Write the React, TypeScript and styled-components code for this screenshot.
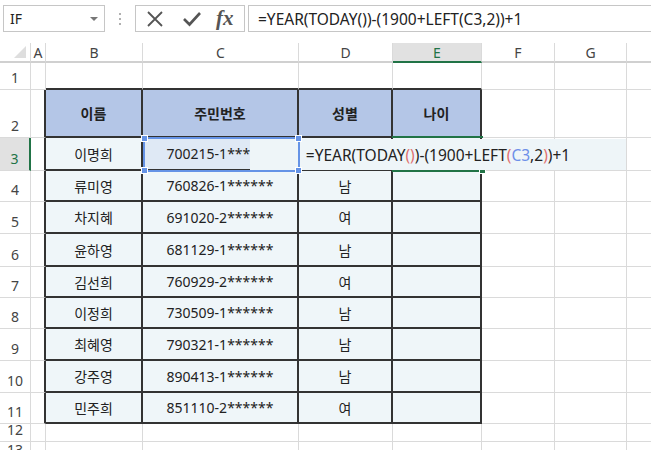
import React from 'react';
import styled, { createGlobalStyle } from 'styled-components';

const GlobalStyle = createGlobalStyle`
  html, body {
    margin: 0;
    padding: 0;
    background: #ffffff;
  }
  body {
    font-family: 'Noto Sans', 'Noto Sans CJK KR', sans-serif;
    overflow: hidden;
  }
`;

// widths: row header, A, B, C, D, E, F, G, H
const COL_WIDTHS = [31, 15, 97, 156, 94, 89, 73, 72, 60];
const COL_NAMES = ['A', 'B', 'C', 'D', 'E', 'F', 'G', ''];
// rows 1..13
const ROW_HEIGHTS = [27, 48, 33, 31, 32, 33, 31, 31, 32, 32, 31, 18, 20];
const HEADER_H = 20;

const GRID = '#dadada';
const DARK = '#333333';
const GREEN = '#217346';

const people = [
  ['이명희', '700215-1******', ''],
  ['류미영', '760826-1******', '남'],
  ['차지혜', '691020-2******', '여'],
  ['윤하영', '681129-1******', '남'],
  ['김선희', '760929-2******', '여'],
  ['이정희', '730509-1******', '남'],
  ['최혜영', '790321-1******', '남'],
  ['강주영', '890413-1******', '남'],
  ['민주희', '851110-2******', '여'],
];

const Page = styled.div`
  width: 651px;
  height: 450px;
  overflow: hidden;
  background: #fff;
`;

const FormulaBar = styled.div`
  height: 43px;
  display: flex;
  align-items: flex-start;
  padding: 5px 0 0 3px;
  box-sizing: border-box;
`;

const NameBox = styled.div`
  width: 102px;
  height: 27px;
  box-sizing: border-box;
  border: 1px solid #c6c6c6;
  display: flex;
  align-items: center;
  justify-content: space-between;
  padding: 0 6px 0 6px;
  font-size: 14px;
  color: #222;
`;

const DropArrow = styled.span`
  width: 0;
  height: 0;
  border-left: 4px solid transparent;
  border-right: 4px solid transparent;
  border-top: 4px solid #777;
`;

const Dots = styled.div`
  width: 30px;
  height: 27px;
  display: flex;
  flex-direction: column;
  align-items: center;
  justify-content: center;
  gap: 3px;
`;

const Dot = styled.span`
  width: 2px;
  height: 2px;
  background: #b0b0b0;
`;

const IconBox = styled.div`
  width: 110px;
  height: 27px;
  box-sizing: border-box;
  border: 1px solid #c6c6c6;
  display: flex;
  align-items: center;
  padding-left: 9px;
  gap: 17px;
`;

const Fx = styled.span`
  font-family: 'Liberation Serif', 'DejaVu Serif', serif;
  font-style: italic;
  font-weight: 700;
  font-size: 21px;
  color: #555;
  line-height: 1;
  margin-left: -3px;
`;

const FormulaInput = styled.div`
  flex: 1;
  margin-left: 3px;
  height: 27px;
  box-sizing: border-box;
  border: 1px solid #c6c6c6;
  border-right: none;
  display: flex;
  align-items: center;
  padding-left: 9px;
  font-size: 15.5px;
  color: #222;
  white-space: nowrap;
`;

const Sheet = styled.div`
  position: relative;
  display: grid;
  grid-template-columns: ${COL_WIDTHS.map((w) => `${w}px`).join(' ')};
  grid-template-rows: ${HEADER_H}px ${ROW_HEIGHTS.map((h) => `${h}px`).join(' ')};
`;

const Corner = styled.div`
  box-sizing: border-box;
  border-right: 1px solid ${GRID};
  border-bottom: 2px solid #d0d0d0;
  display: flex;
  align-items: flex-end;
  justify-content: flex-end;
  padding: 0 4px 3px 0;
`;

const CornerTriangle = styled.span`
  width: 0;
  height: 0;
  border-left: 12px solid transparent;
  border-bottom: 12px solid #dedede;
`;

const ColHead = styled.div<{ $active?: boolean }>`
  box-sizing: border-box;
  display: flex;
  align-items: center;
  justify-content: center;
  font-size: 14px;
  color: ${(p) => (p.$active ? GREEN : '#444')};
  background: ${(p) => (p.$active ? '#e1e1e1' : '#fff')};
  border-right: 1px solid ${GRID};
  border-bottom: 2px solid ${(p) => (p.$active ? GREEN : '#d0d0d0')};
`;

const RowHead = styled.div<{ $active?: boolean }>`
  box-sizing: border-box;
  display: flex;
  align-items: flex-end;
  justify-content: center;
  padding-bottom: 2px;
  font-size: 14px;
  line-height: 18px;
  color: ${(p) => (p.$active ? GREEN : '#444')};
  background: ${(p) => (p.$active ? '#e1e1e1' : '#fff')};
  border-right: ${(p) => (p.$active ? `2px solid ${GREEN}` : `1px solid ${GRID}`)};
  border-bottom: 1px solid ${GRID};
`;

const Cell = styled.div<{ $fill?: string; $bold?: boolean; $darkRight?: boolean; $darkBottom?: boolean }>`
  box-sizing: border-box;
  display: flex;
  align-items: center;
  justify-content: center;
  overflow: hidden;
  white-space: nowrap;
  font-size: 14px;
  font-weight: ${(p) => (p.$bold ? 700 : 400)};
  color: #222;
  background: ${(p) => p.$fill || '#fff'};
  border-right: ${(p) => (p.$darkRight ? `2px solid ${DARK}` : `1px solid ${GRID}`)};
  border-bottom: ${(p) => (p.$darkBottom ? `2px solid ${DARK}` : `1px solid ${GRID}`)};
`;

const ActiveCell = styled.div`
  position: absolute;
  left: 392px;
  top: 93px;
  width: 91px;
  height: 36px;
  box-sizing: border-box;
  border-top: 2px solid ${GREEN};
  border-bottom: 2px solid ${GREEN};
  z-index: 1;
`;

const FillHandle = styled.span`
  position: absolute;
  right: -3px;
  bottom: -4px;
  width: 5px;
  height: 5px;
  background: ${GREEN};
  border: 1px solid #fff;
`;

const RefBox = styled.div`
  position: absolute;
  left: 143px;
  top: 94px;
  width: 157px;
  height: 35px;
  box-sizing: border-box;
  border: 2px solid #6593e6;
  z-index: 3;
`;

const Handle = styled.span<{ $x: 'left' | 'right'; $y: 'top' | 'bottom' }>`
  position: absolute;
  ${(p) => p.$x}: -4px;
  ${(p) => p.$y}: -4px;
  width: 5px;
  height: 5px;
  background: #6593e6;
  border: 1px solid #fff;
`;

const Editor = styled.div`
  position: absolute;
  left: 250px;
  top: 96px;
  width: 376px;
  height: 31px;
  background: #eef5f8;
  z-index: 2;
  display: flex;
  align-items: center;
  justify-content: center;
  font-size: 15.5px;
  color: #222;
  white-space: nowrap;
`;

const Tok = styled.span<{ $c: 'red' | 'blue' }>`
  color: ${(p) => (p.$c === 'red' ? '#e06f6f' : '#6d8fe8')};
`;

const inTable = (r: number, c: number) => r >= 2 && r <= 11 && c >= 2 && c <= 5;

const cellText = (r: number, c: number) => {
  if (r === 2) return ['', '', '이름', '주민번호', '성별', '나이'][c] || '';
  if (r >= 3 && r <= 11) {
    const p = people[r - 3];
    if (c >= 2 && c <= 4) return p[c - 2];
  }
  return '';
};

const cellFill = (r: number, c: number) => {
  if (!inTable(r, c)) return undefined;
  if (r === 2) return '#b4c6e7';
  if (r === 3 && c === 3) return '#dfe9f5';
  return '#eff6f9';
};

const CrossIcon = () => (
  <svg width="20" height="16" viewBox="0 0 20 16">
    <path d="M3 1 L17 15 M17 1 L3 15" stroke="#555" strokeWidth="1.8" fill="none" />
  </svg>
);

const CheckIcon = () => (
  <svg width="20" height="16" viewBox="0 0 20 16">
    <path d="M2 8 L7.5 13.5 L18 2" stroke="#555" strokeWidth="2.6" fill="none" />
  </svg>
);

const Formula = () => (
  <>
    =YEAR(TODAY<Tok $c="red">()</Tok>)-(1900+LEFT<Tok $c="red">(</Tok>
    <Tok $c="blue">C3</Tok>,2<Tok $c="red">)</Tok>)+1
  </>
);

const App: React.FC = () => {
  const cells: React.ReactNode[] = [];

  cells.push(
    <Corner key="corner">
      <CornerTriangle />
    </Corner>
  );
  COL_NAMES.forEach((name, i) => {
    cells.push(
      <ColHead key={`h${i}`} $active={name === 'E'}>
        {name}
      </ColHead>
    );
  });

  ROW_HEIGHTS.forEach((_, ri) => {
    const r = ri + 1;
    cells.push(
      <RowHead key={`r${r}`} $active={r === 3}>
        {r}
      </RowHead>
    );
    for (let c = 1; c <= 8; c++) {
      cells.push(
        <Cell
          key={`c${r}-${c}`}
          $fill={cellFill(r, c)}
          $bold={r === 2 && inTable(r, c)}
          $darkRight={inTable(r, c) || inTable(r, c + 1)}
          $darkBottom={inTable(r, c) || inTable(r + 1, c)}
        >
          {cellText(r, c)}
        </Cell>
      );
    }
  });

  return (
    <Page>
      <GlobalStyle />
      <FormulaBar>
        <NameBox>
          IF
          <DropArrow />
        </NameBox>
        <Dots>
          <Dot />
          <Dot />
          <Dot />
        </Dots>
        <IconBox>
          <CrossIcon />
          <CheckIcon />
          <Fx>fx</Fx>
        </IconBox>
        <FormulaInput>
          =YEAR(TODAY())-(1900+LEFT(C3,2))+1
        </FormulaInput>
      </FormulaBar>
      <Sheet>
        {cells}
        <ActiveCell>
          <FillHandle />
        </ActiveCell>
        <RefBox>
          <Handle $x="left" $y="top" />
          <Handle $x="right" $y="top" />
          <Handle $x="left" $y="bottom" />
          <Handle $x="right" $y="bottom" />
        </RefBox>
        <Editor>
          <Formula />
        </Editor>
      </Sheet>
    </Page>
  );
};

export default App;
